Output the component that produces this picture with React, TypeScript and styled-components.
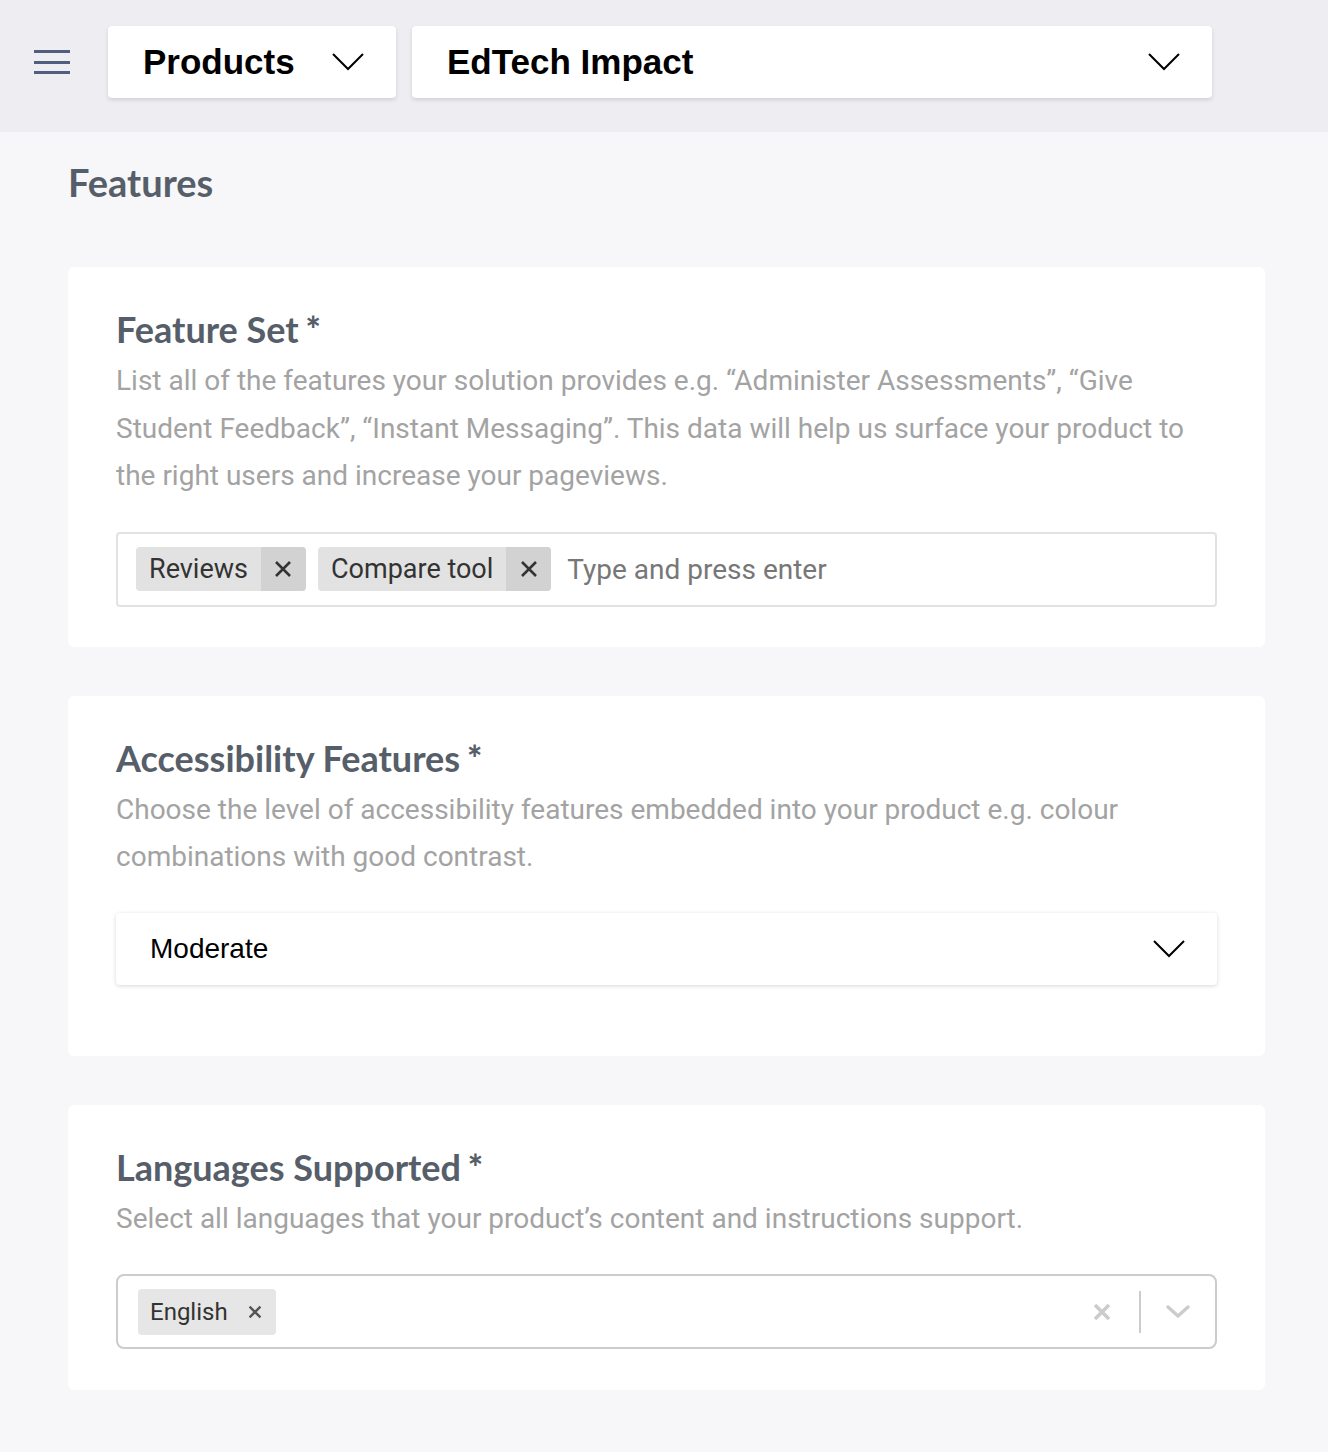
import styled, { createGlobalStyle } from 'styled-components';

const GlobalStyle = createGlobalStyle`
  html, body {
    margin: 0;
    padding: 0;
    background: #f7f7f9;
  }
  * {
    box-sizing: border-box;
  }
`;

const Page = styled.div`
  min-height: 1452px;
  background: #f7f7f9;
`;

const TopBar = styled.header`
  height: 132px;
  background: #ededf2;
  display: flex;
  align-items: center;
  padding: 0 0 8px 34px;
`;

const MenuButton = styled.button`
  width: 36px;
  height: 24px;
  padding: 0;
  border: none;
  background: none;
  display: flex;
  flex-direction: column;
  justify-content: space-between;
  margin-right: 38px;
  cursor: pointer;

  span {
    display: block;
    height: 3px;
    background: #525e80;
  }
`;

const Dropdown = styled('button')<{ width: number }>`
  width: ${(p) => p.width}px;
  height: 72px;
  margin-right: 16px;
  border: none;
  border-radius: 4px;
  background: #fff;
  box-shadow: 0 2px 4px rgba(0, 0, 0, 0.12);
  display: flex;
  align-items: center;
  justify-content: space-between;
  padding: 0 32px 0 35px;
  font-family: 'Liberation Sans', Arial, sans-serif;
  font-weight: 700;
  font-size: 35px;
  color: #000;
  cursor: pointer;
`;

const Content = styled.main`
  padding: 30px 63px 60px 68px;
`;

const PageTitle = styled.h1`
  margin: 0 0 65px;
  font-family: Lato, 'Open Sans', sans-serif;
  font-weight: 700;
  font-size: 38px;
  line-height: 40px;
  color: #565e69;
`;

const Card = styled.section`
  background: #fff;
  border-radius: 6px;
  padding: 42px 48px 40px;
  margin-bottom: 49px;
`;

const FieldTitle = styled.h2`
  margin: 0 0 8px;
  font-family: Lato, 'Open Sans', sans-serif;
  font-weight: 700;
  font-size: 36px;
  line-height: 40px;
  color: #565e69;
`;

const Required = styled.span`
  font-weight: 900;
  margin-left: -2px;
`;

const FieldHint = styled.p`
  margin: 0 0 32px;
  font-family: Roboto, 'Noto Sans', sans-serif;
  font-size: 28px;
  line-height: 47.5px;
  color: #a3a3a3;
`;

const TagInputBox = styled.div`
  height: 75px;
  border: 2px solid #e2e2e2;
  border-radius: 4px;
  display: flex;
  align-items: center;
  padding: 0 18px;
  gap: 12px;
`;

const Tag = styled.span`
  height: 44px;
  display: inline-flex;
  align-items: stretch;
  background: #e2e2e2;
  border-radius: 4px;
  overflow: hidden;
  font-family: Roboto, 'Noto Sans', sans-serif;
  font-size: 27px;
  color: #333;
`;

const TagLabel = styled.span`
  display: flex;
  align-items: center;
  padding: 0 13px;
`;

const TagRemove = styled.span`
  width: 45px;
  display: flex;
  align-items: center;
  justify-content: center;
  background: #d2d2d2;
`;

const TagField = styled.input`
  flex: 1;
  border: none;
  outline: none;
  background: transparent;
  font-family: Roboto, 'Noto Sans', sans-serif;
  font-size: 28px;
  color: #333;
  padding: 0 4px;

  &::placeholder {
    color: #777;
  }
`;

const SelectBox = styled.div`
  height: 72px;
  border-radius: 4px;
  background: #fff;
  box-shadow: 0 1px 4px rgba(0, 0, 0, 0.16);
  display: flex;
  align-items: center;
  justify-content: space-between;
  padding: 0 32px 0 34px;
  margin-bottom: 31px;
  font-family: 'Liberation Sans', Arial, sans-serif;
  font-size: 28px;
  color: #000;
`;

const MultiBox = styled.div`
  height: 75px;
  border: 2px solid #cccccc;
  border-radius: 8px;
  display: flex;
  align-items: center;
  padding: 0 0 0 20px;
  margin-bottom: 1px;
`;

const Values = styled.div`
  flex: 1;
  display: flex;
  gap: 8px;
`;

const Chip = styled.span`
  height: 46px;
  display: inline-flex;
  align-items: center;
  gap: 20px;
  padding: 0 14px 0 12px;
  background: #e6e6e6;
  border-radius: 4px;
  font-family: Roboto, 'Noto Sans', sans-serif;
  font-size: 24px;
  color: #333;
`;

const Indicators = styled.div`
  display: flex;
  align-items: center;
  height: 100%;
`;

const Indicator = styled.span`
  width: 74px;
  display: flex;
  align-items: center;
  justify-content: center;
`;

const Separator = styled.span`
  width: 2px;
  height: 42px;
  background: #cccccc;
`;

const Chevron = ({ size = 32, color = '#000', width = 2 }: { size?: number; color?: string; width?: number }) => (
  <svg width={size} height={size / 2 + 2} viewBox="0 0 32 18" fill="none">
    <path d="M1 1 L16 16 L31 1" stroke={color} strokeWidth={width * (32 / size)} />
  </svg>
);

const Cross = ({ size = 18, color = '#333', width = 2.6 }: { size?: number; color?: string; width?: number }) => (
  <svg width={size} height={size} viewBox="0 0 18 18" fill="none">
    <path d="M2 2 L16 16 M16 2 L2 16" stroke={color} strokeWidth={width} />
  </svg>
);

const SmallChevron = () => (
  <svg width="24" height="14" viewBox="0 0 24 14" fill="none">
    <path d="M2 2 L12 11 L22 2" stroke="#cccccc" strokeWidth="3.4" strokeLinecap="round" strokeLinejoin="round" />
  </svg>
);

const App = () => (
  <Page>
    <GlobalStyle />
    <TopBar>
      <MenuButton aria-label="Menu">
        <span />
        <span />
        <span />
      </MenuButton>
      <Dropdown width={288}>
        Products
        <Chevron />
      </Dropdown>
      <Dropdown width={800}>
        EdTech Impact
        <Chevron />
      </Dropdown>
    </TopBar>
    <Content>
      <PageTitle>Features</PageTitle>

      <Card>
        <FieldTitle>
          Feature Set <Required>*</Required>
        </FieldTitle>
        <FieldHint>
          List all of the features your solution provides e.g. “Administer Assessments”, “Give Student Feedback”,
          “Instant Messaging”. This data will help us surface your product to the right users and increase your
          pageviews.
        </FieldHint>
        <TagInputBox>
          <Tag>
            <TagLabel>Reviews</TagLabel>
            <TagRemove>
              <Cross />
            </TagRemove>
          </Tag>
          <Tag>
            <TagLabel>Compare tool</TagLabel>
            <TagRemove>
              <Cross />
            </TagRemove>
          </Tag>
          <TagField placeholder="Type and press enter" />
        </TagInputBox>
      </Card>

      <Card>
        <FieldTitle>
          Accessibility Features <Required>*</Required>
        </FieldTitle>
        <FieldHint>
          Choose the level of accessibility features embedded into your product e.g. colour combinations with good
          contrast.
        </FieldHint>
        <SelectBox>
          Moderate
          <Chevron />
        </SelectBox>
      </Card>

      <Card>
        <FieldTitle>
          Languages Supported <Required>*</Required>
        </FieldTitle>
        <FieldHint>Select all languages that your product’s content and instructions support.</FieldHint>
        <MultiBox>
          <Values>
            <Chip>
              English
              <Cross size={14} color="#555" width={3} />
            </Chip>
          </Values>
          <Indicators>
            <Indicator>
              <Cross size={18} color="#cccccc" width={3.6} />
            </Indicator>
            <Separator />
            <Indicator>
              <SmallChevron />
            </Indicator>
          </Indicators>
        </MultiBox>
      </Card>
    </Content>
  </Page>
);

export default App;
